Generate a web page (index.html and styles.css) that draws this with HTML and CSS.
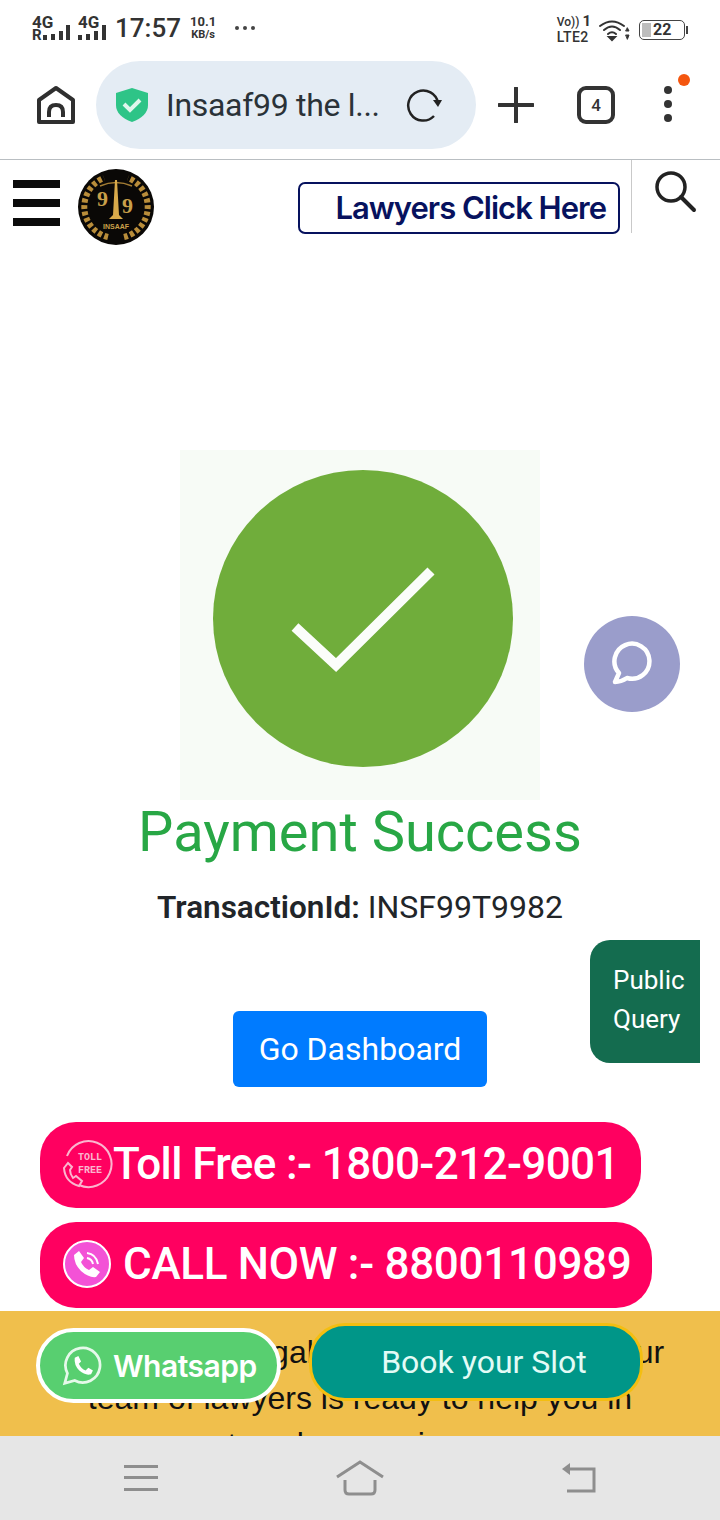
FILE: index.html
```html
<!DOCTYPE html>
<html lang="en">
<head>
  <meta charset="UTF-8" />
  <meta name="viewport" content="width=device-width, initial-scale=1.0"/>
  <title>Payment Success</title>
  <link rel="stylesheet" href="styles.css">
</head>
<body>
  <div class="phone">
    <!-- Status bar -->
    <div class="status">
      <div class="status-left">
        <div class="net"><span class="net-g">4G</span><span class="net-r">R</span>
          <svg class="bars" width="30" height="18" viewBox="0 0 30 18"><rect x="0" y="12" width="4" height="5" fill="#333"/><rect x="8" y="11" width="4" height="6" fill="#333"/><rect x="16" y="8" width="4" height="9" fill="#333"/><rect x="23" y="2" width="4" height="15" fill="#333"/></svg>
        </div>
        <div class="net net-two"><span class="net-g">4G</span>
          <svg class="bars" width="30" height="18" viewBox="0 0 30 18"><rect x="0" y="12" width="4" height="5" fill="#333"/><rect x="8" y="11" width="4" height="6" fill="#333"/><rect x="16" y="8" width="4" height="9" fill="#333"/><rect x="24" y="2" width="4" height="15" fill="#333"/></svg>
        </div>
        <span class="clock">17:57</span>
        <div class="speed"><span>10.1</span><span class="speed-unit">KB/s</span></div>
        <svg class="more" width="22" height="6" viewBox="0 0 22 6"><circle cx="3" cy="3" r="2" fill="#444"/><circle cx="11" cy="3" r="2" fill="#444"/><circle cx="19" cy="3" r="2" fill="#444"/></svg>
      </div>
      <div class="status-right">
        <div class="volte"><span class="vo">Vo)) <b>1</b></span><span>LTE2</span></div>
        <svg class="wifi" width="32" height="24" viewBox="0 0 32 24" fill="none" stroke="#333" stroke-width="2" stroke-linecap="round">
          <path d="M1 8Q13 -1 25 8"/><path d="M5 12Q13 5 21 12"/><path d="M9 16Q13 12.500 17 16"/>
          <path d="M10 19L13 22L16 19Z" fill="#333"/>
          <path d="M27 13L30 13L28.500 10Z M27 17L30 17L28.500 21Z" fill="#333" stroke-width="1"/>
        </svg>
        <div class="battery"><span class="battery-fill"></span><span class="battery-num">22</span></div>
        <span class="battery-tip"></span>
      </div>
    </div>

    <!-- Browser bar -->
    <div class="browser">
      <svg class="home-ico" width="38" height="38" viewBox="0 0 38 38" fill="none" stroke="#2f2f2f" stroke-width="4" stroke-linejoin="round">
        <path d="M2 14L19 2L36 14V36H2Z"/>
        <path d="M12 31V26Q12 19 19 19Q26 19 26 26V31" />
      </svg>
      <div class="urlbar">
        <svg class="shield" width="36" height="36" viewBox="0 0 36 36">
          <path d="M18 1L34 6V18Q34 29 18 35Q2 29 2 18V6Z" fill="#2ec487"/>
          <path d="M10 17L16 23L26 13" fill="none" stroke="#dff6ec" stroke-width="4"/>
        </svg>
        <span class="url-text">Insaaf99 the l...</span>
        <svg class="reload" width="36" height="36" viewBox="0 0 36 36" fill="none" stroke="#222" stroke-width="2.500">
          <path d="M32 16A15 15 0 1 0 28 29"/>
          <path d="M27 13L36 13L32 20Z" fill="#222" stroke="none"/>
        </svg>
      </div>
      <svg class="plus" width="36" height="36" viewBox="0 0 36 36" stroke="#333" stroke-width="4" stroke-linecap="round"><path d="M18 1V35M1 18H35"/></svg>
      <div class="tabs">4</div>
      <div class="menu-wrap">
        <svg width="14" height="40" viewBox="0 0 14 40" fill="#333"><circle cx="7" cy="5" r="4"/><circle cx="7" cy="19" r="4"/><circle cx="7" cy="33" r="4"/></svg>
        <span class="menu-dot"></span>
      </div>
    </div>

    <!-- Web page -->
    <div class="page">
      <header class="site-head">
        <div class="burger"><span></span><span></span><span></span></div>
        <svg class="logo" width="76" height="76" viewBox="0 0 76 76">
          <circle cx="38" cy="38" r="38" fill="#0a0806"/>
          <g fill="none" stroke="#b98d3a" stroke-width="6" stroke-dasharray="4 2.500">
            <path d="M30 68A31 31 0 0 1 26 9"/>
            <path d="M46 68A31 31 0 0 0 50 9"/>
          </g>
          <path d="M22 17Q38 10 54 17" stroke="#a37c33" stroke-width="1.500" fill="none"/>
          <path d="M37 11H39L41 46L45 50H31L35 46Z" fill="#d8a94a"/>
          <text x="19" y="37" class="logo-nine">9</text>
          <text x="44" y="44" class="logo-nine">9</text>
          <text x="38" y="60" class="logo-name">INSAAF</text>
        </svg>
        <a class="lawyers-btn">Lawyers Click Here</a>
        <div class="search-box">
          <svg width="44" height="44" viewBox="0 0 44 44" fill="none" stroke="#222" stroke-width="3.500" stroke-linecap="round"><circle cx="18" cy="17" r="14"/><path d="M28 27L41 40" stroke-width="4"/></svg>
        </div>
      </header>

      <main class="result">
        <div class="tick-pic">
          <svg width="300" height="298" viewBox="0 0 300 298">
            <ellipse cx="150" cy="148.500" rx="150" ry="148.500" fill="#70ad3b"/>
            <path d="M82 157L123 195L218 101" fill="none" stroke="#fbfdfa" stroke-width="10"/>
          </svg>
        </div>
        <h1 class="title">Payment Success</h1>
        <p class="txn"><b>TransactionId:</b> INSF99T9982</p>
        <a class="dash-btn">Go Dashboard</a>
      </main>

      <div class="pills">
        <a class="pill pill-toll">
          <svg class="pill-ico" width="52" height="52" viewBox="0 0 52 52" fill="none" stroke="#fbb6cf" stroke-width="2">
            <path d="M6 18A23 23 0 1 1 18 47"/>
            <path d="M3 30Q4 44 18 48L21 43L15 38L12 40Q9 36 9 32L11 29L7 25Z"/>
            <text x="29" y="22" class="toll-txt">TOLL</text>
            <text x="29" y="35" class="toll-txt">FREE</text>
          </svg>
          <span>Toll Free :- 1800-212-9001</span>
        </a>
        <a class="pill pill-call">
          <svg class="pill-ico-call" width="48" height="48" viewBox="0 0 48 48">
            <circle cx="24" cy="24" r="23" fill="#f352d6" stroke="#fff" stroke-width="2"/>
            <path d="M11 15L16 11L21 18L18 22Q20 27 26 30L30 27L37 32L33 37Q26 38 18 31Q11 24 11 15Z" fill="#fff"/>
            <path d="M24 13Q33 14 35 24M24 18Q29 19 30 24" fill="none" stroke="#fff" stroke-width="2"/>
          </svg>
          <span>CALL NOW :- 8800110989</span>
        </a>
      </div>

      <section class="promo">
        <p>Do you need legal problems resolved? Our<br>team of lawyers is ready to help you in<br>to solve your issue</p>
      </section>

      <!-- Floating widgets -->
      <a class="chat-fab">
        <svg width="48" height="48" viewBox="0 0 48 48" fill="none" stroke="#fff" stroke-width="4.500" stroke-linejoin="round" stroke-linecap="round">
          <path d="M7 42L11 33A17.500 17.500 0 1 1 19 38Q13 42 7 42Z"/>
        </svg>
      </a>
      <a class="query-tab">Public<br>Query</a>
      <a class="wa-btn">
        <svg width="40" height="42" viewBox="0 0 44 44" fill="none" stroke="#e6f9ea" stroke-width="3">
          <path d="M3 41L6 30A19 19 0 1 1 14 38Z"/>
          <path d="M14 13L18 11L21 17L18.500 19.500Q21 25 26 27L29 24L34 27L32 31Q26 33 19 27Q13 21 14 13Z" fill="#fff" stroke="none"/>
        </svg>
        <span>Whatsapp</span>
      </a>
      <a class="slot-btn">Book your Slot</a>
    </div>

    <!-- Android nav bar -->
    <nav class="sysnav">
      <svg width="34" height="28" viewBox="0 0 34 28" fill="#8e8e8e"><rect y="1" width="34" height="3"/><rect y="12" width="34" height="3"/><rect y="24" width="34" height="3"/></svg>
      <svg width="48" height="36" viewBox="0 0 48 36" fill="none" stroke="#8e8e8e" stroke-width="3"><path d="M1 17L24 2L47 17"/><path d="M9 20V30Q9 34 13 34H35Q39 34 39 30V20"/></svg>
      <svg width="36" height="32" viewBox="0 0 36 32" fill="none" stroke="#8e8e8e" stroke-width="3"><path d="M6 7H33V29H6"/><path d="M1 7L9 1V13Z" fill="#8e8e8e" stroke="none"/></svg>
    </nav>
  </div>
</body>
</html>
```

FILE: styles.css
```css
* {
  box-sizing: border-box;
}

body {
  margin: 0;
  font-family: Roboto, Arial, sans-serif;
  background: #fff;
}

.phone {
  width: 720px;
  height: 1520px;
  display: flex;
  flex-direction: column;
  overflow: hidden;
  background: #fff;
}

/* Status bar */
.status {
  height: 56px;
  padding: 12px 32px 0 32px;
  display: flex;
  justify-content: space-between;
  align-items: flex-start;
  color: #333;
}

.status-left,
.status-right {
  display: flex;
  align-items: center;
}

.net {
  position: relative;
  width: 40px;
  height: 28px;
  font-weight: 700;
  font-size: 14px;
  line-height: 14px;
}

.net-two {
  width: 34px;
  margin-left: 6px;
}

.net-g {
  position: absolute;
  left: 0;
  top: 1px;
  font-size: 17px;
}

.net-r {
  position: absolute;
  left: 0;
  top: 15px;
  font-size: 15px;
  line-height: 13px;
}

.bars {
  position: absolute;
  left: 11px;
  top: 9px;
}

.net-two .bars {
  left: 0;
}

.clock {
  font-size: 26px;
  font-weight: 500;
  line-height: 32px;
  margin-left: 3px;
}

.speed {
  display: flex;
  flex-direction: column;
  align-items: center;
  font-size: 13px;
  font-weight: 700;
  line-height: 13px;
  margin-left: 9px;
}

.speed-unit {
  font-size: 11px;
}

.more {
  margin-left: 18px;
}

.status-right {
  margin-top: 2px;
}

.volte {
  display: flex;
  flex-direction: column;
  font-size: 14px;
  font-weight: 500;
  line-height: 15px;
  letter-spacing: 0.4px;
}

.vo {
  font-size: 12px;
  letter-spacing: 0;
}

.volte b {
  font-size: 15px;
}

.wifi {
  margin-left: 8px;
}

.battery {
  width: 46px;
  height: 20px;
  margin-left: 8px;
  border: 1px solid #444;
  border-radius: 5px;
  display: flex;
  align-items: center;
  padding-left: 2px;
}

.battery-fill {
  width: 9px;
  height: 14px;
  background: #bdbdbd;
}

.battery-num {
  font-size: 16px;
  font-weight: 700;
  margin-left: 2px;
}

.battery-tip {
  width: 2px;
  height: 8px;
  margin-left: 1px;
  background: #444;
}

/* Browser bar */
.browser {
  height: 104px;
  padding: 5px 0 10px 37px;
  display: flex;
  align-items: center;
  border-bottom: 1px solid #b9bec2;
}

.home-ico {
  flex: none;
}

.urlbar {
  width: 380px;
  height: 88px;
  margin-left: 21px;
  padding: 0 34px 0 18px;
  background: #e4ecf4;
  border-radius: 44px;
  display: flex;
  align-items: center;
}

.shield {
  flex: none;
}

.url-text {
  flex: 1;
  font-size: 32px;
  letter-spacing: -0.3px;
  margin-left: 16px;
  color: #2a3238;
  white-space: nowrap;
}

.plus {
  margin-left: 22px;
}

.tabs {
  width: 38px;
  height: 38px;
  margin-left: 43px;
  border: 4px solid #333;
  border-radius: 9px;
  display: flex;
  align-items: center;
  justify-content: center;
  font-size: 17px;
  font-weight: 500;
  color: #333;
}

.menu-wrap {
  position: relative;
  margin-left: 46px;
  height: 40px;
}

.menu-dot {
  position: absolute;
  left: 17px;
  top: -11px;
  width: 12px;
  height: 12px;
  border-radius: 50%;
  background: #f4560f;
}

/* Web page */
.page {
  position: relative;
  flex: 1;
  min-height: 0;
  overflow: hidden;
}

.site-head {
  height: 74px;
  padding-left: 13px;
  display: flex;
  align-items: flex-start;
}

.burger {
  width: 47px;
  margin-top: 20px;
  display: flex;
  flex-direction: column;
  gap: 11px;
}

.burger span {
  height: 8px;
  background: #0b0b0b;
}

.logo {
  margin: 9px 0 0 18px;
  flex: none;
}

.logo-nine {
  font-family: "Liberation Serif", serif;
  font-size: 22px;
  font-weight: 700;
  fill: #c9a04a;
}

.logo-name {
  font-family: "Liberation Sans", sans-serif;
  font-size: 7px;
  font-weight: 700;
  fill: #c9a04a;
  text-anchor: middle;
}

.lawyers-btn {
  width: 322px;
  height: 52px;
  margin: 22px 0 0 144px;
  padding: 0 12px 2px 0;
  border: 2px solid #07125e;
  border-radius: 7px;
  display: flex;
  align-items: center;
  justify-content: flex-end;
  font-family: Inter, Arial, sans-serif;
  font-size: 31px;
  font-weight: 600;
  letter-spacing: -1px;
  color: #07125e;
}

.search-box {
  height: 73px;
  margin-left: 11px;
  padding: 10px 0 0 21px;
  border-left: 1px solid #c9c9c9;
}

.result {
  padding-top: 216px;
  display: flex;
  flex-direction: column;
  align-items: center;
}

.tick-pic {
  width: 360px;
  height: 350px;
  padding: 20px 0 0 33px;
  background: #f7fbf6;
}

.tick-pic svg {
  display: block;
}

.title {
  margin: -1px 0 0;
  font-size: 56px;
  font-weight: 400;
  line-height: 66px;
  color: #28a745;
}

.txn {
  margin: 24px 0 0;
  font-size: 32px;
  line-height: 36px;
  color: #212529;
}

.txn b {
  font-weight: 600;
  font-size: 31.500px;
}

.dash-btn {
  width: 254px;
  height: 76px;
  margin-top: 85px;
  border-radius: 6px;
  background: #007bff;
  color: #fff;
  font-size: 32px;
  display: flex;
  align-items: center;
  justify-content: center;
}

.pills {
  padding: 35px 0 0 40px;
  display: flex;
  flex-direction: column;
  align-items: flex-start;
  gap: 14px;
}

.pill {
  height: 86px;
  padding-bottom: 2px;
  border-radius: 36px;
  background: #ff0060;
  color: #fff;
  font-size: 44px;
  font-weight: 500;
  display: flex;
  align-items: center;
  white-space: nowrap;
}

.pill-toll {
  width: 601px;
  padding-left: 21px;
  letter-spacing: -0.6px;
}

.pill-call {
  width: 612px;
  padding-left: 23px;
  letter-spacing: -0.3px;
}

.pill-ico {
  flex: none;
  margin-right: 0;
}

.pill-ico-call {
  flex: none;
  margin-right: 12px;
}

.toll-txt {
  font-family: "Liberation Mono", monospace;
  font-size: 10px;
  font-weight: 700;
  letter-spacing: 0;
  fill: #fbb6cf;
  stroke: none;
  text-anchor: middle;
}

.promo {
  height: 200px;
  margin-top: 3px;
  padding-top: 18px;
  background: #f0bf4c;
}

.promo p {
  margin: 0;
  font-family: "Liberation Sans", Arial, sans-serif;
  font-size: 32px;
  line-height: 46px;
  text-align: center;
  color: #111;
  white-space: nowrap;
}

/* Floating widgets */
.chat-fab {
  position: absolute;
  left: 584px;
  top: 456px;
  width: 96px;
  height: 96px;
  border-radius: 50%;
  background: #9a9dcb;
  display: flex;
  align-items: center;
  justify-content: center;
}

.query-tab {
  position: absolute;
  left: 590px;
  top: 780px;
  width: 110px;
  height: 123px;
  padding: 21px 0 0 23px;
  border-radius: 20px 0 0 20px;
  background: #146c4f;
  color: #fff;
  font-size: 26px;
  line-height: 39px;
}

.wa-btn {
  position: absolute;
  left: 36px;
  top: 1168px;
  width: 245px;
  height: 75px;
  padding-left: 22px;
  border: 4px solid #fff;
  border-radius: 38px;
  background: #58cf70;
  color: #fff;
  font-family: Inter, Arial, sans-serif;
  font-size: 30px;
  font-weight: 600;
  letter-spacing: -0.5px;
  display: flex;
  align-items: center;
  gap: 11px;
}

.slot-btn {
  position: absolute;
  left: 309px;
  top: 1163px;
  width: 334px;
  height: 78px;
  padding-left: 16px;
  border: 3px solid #f4be10;
  border-radius: 36px;
  background: #009688;
  color: #e3fbf6;
  font-size: 32px;
  display: flex;
  align-items: center;
  justify-content: center;
}

/* Android nav bar */
.sysnav {
  height: 84px;
  padding: 0 123px 0 124px;
  background: #e6e6e6;
  display: flex;
  align-items: center;
  justify-content: space-between;
}
```
